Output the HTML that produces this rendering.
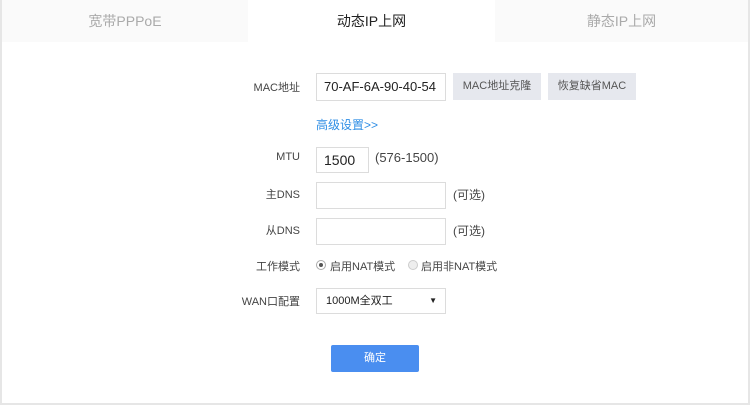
<!DOCTYPE html>
<html><head><meta charset="utf-8"><style>
*{margin:0;padding:0;box-sizing:border-box}
body{width:750px;height:405px;background:#fff;font-family:"Liberation Sans","Noto Sans CJK SC",sans-serif;position:relative;overflow:hidden;color:#333}
.frame{position:absolute;left:0;top:0;width:750px;height:405px;border:2px solid #e6e6e6;border-top:none}
.tab{position:absolute;top:0;height:42px;line-height:42px;text-align:center;font-size:14px;color:#aaa;background:#fafafa}
.a{position:absolute;font-size:11px;color:#444}
.lbl{position:absolute;right:450px;font-size:11px;color:#444;text-align:right}
.in{position:absolute;border:1px solid #dcdcdc;background:#fff;font-size:14px;color:#222;padding-left:7px}
.btn{position:absolute;background:#e6e8ee;font-size:11px;color:#555;text-align:center}
.rad{position:absolute;width:10px;height:10px;border-radius:50%;border:1px solid #aaa;background:#fff}
</style></head><body>
<div class="frame"></div>
<div class="tab" style="left:2px;width:246px">宽带PPPoE</div>
<div class="tab" style="left:248px;width:247px;background:#fff;color:#222">动态IP上网</div>
<div class="tab" style="left:495px;width:253px">静态IP上网</div>

<div class="lbl" style="top:79px">MAC地址</div>
<div class="in" style="left:316px;top:73px;width:130px;height:28px;line-height:26px;font-size:13px">70-AF-6A-90-40-54</div>
<div class="btn" style="left:453px;top:73px;width:88px;height:27px;line-height:27px">MAC地址克隆</div>
<div class="btn" style="left:548px;top:73px;width:88px;height:27px;line-height:27px">恢复缺省MAC</div>
<div class="a" style="left:316px;top:116px;font-size:12px;color:#2f8ee5">高级设置&gt;&gt;</div>

<div class="lbl" style="top:151px">MTU</div>
<div class="in" style="left:316px;top:147px;width:53px;height:26px;line-height:24px">1500</div>
<div class="a" style="left:375px;top:150px;font-size:13px">(576-1500)</div>

<div class="lbl" style="top:186px">主DNS</div>
<div class="in" style="left:316px;top:182px;width:130px;height:27px"></div>
<div class="a" style="left:453px;top:186px;font-size:12px">(可选)</div>

<div class="lbl" style="top:222px">从DNS</div>
<div class="in" style="left:316px;top:218px;width:130px;height:27px"></div>
<div class="a" style="left:453px;top:222px;font-size:12px">(可选)</div>

<div class="lbl" style="top:258px">工作模式</div>
<div class="rad" style="left:316px;top:260px"><div style="position:absolute;left:2px;top:2px;width:4px;height:4px;border-radius:50%;background:#555"></div></div>
<div class="a" style="left:330px;top:258px">启用NAT模式</div>
<div class="rad" style="left:408px;top:260px;background:#eee;border-color:#ccc"></div>
<div class="a" style="left:421px;top:258px">启用非NAT模式</div>

<div class="lbl" style="top:293px">WAN口配置</div>
<div class="in" style="left:316px;top:288px;width:130px;height:26px;line-height:24px;font-size:11px;padding-left:9px">1000M全双工<span style="position:absolute;right:8px;font-size:8px">▼</span></div>

<div style="position:absolute;left:331px;top:345px;width:88px;height:27px;background:#4a8ef0;border-radius:2px;color:#fff;font-size:11px;text-align:center;line-height:27px">确定</div>
</body></html>
